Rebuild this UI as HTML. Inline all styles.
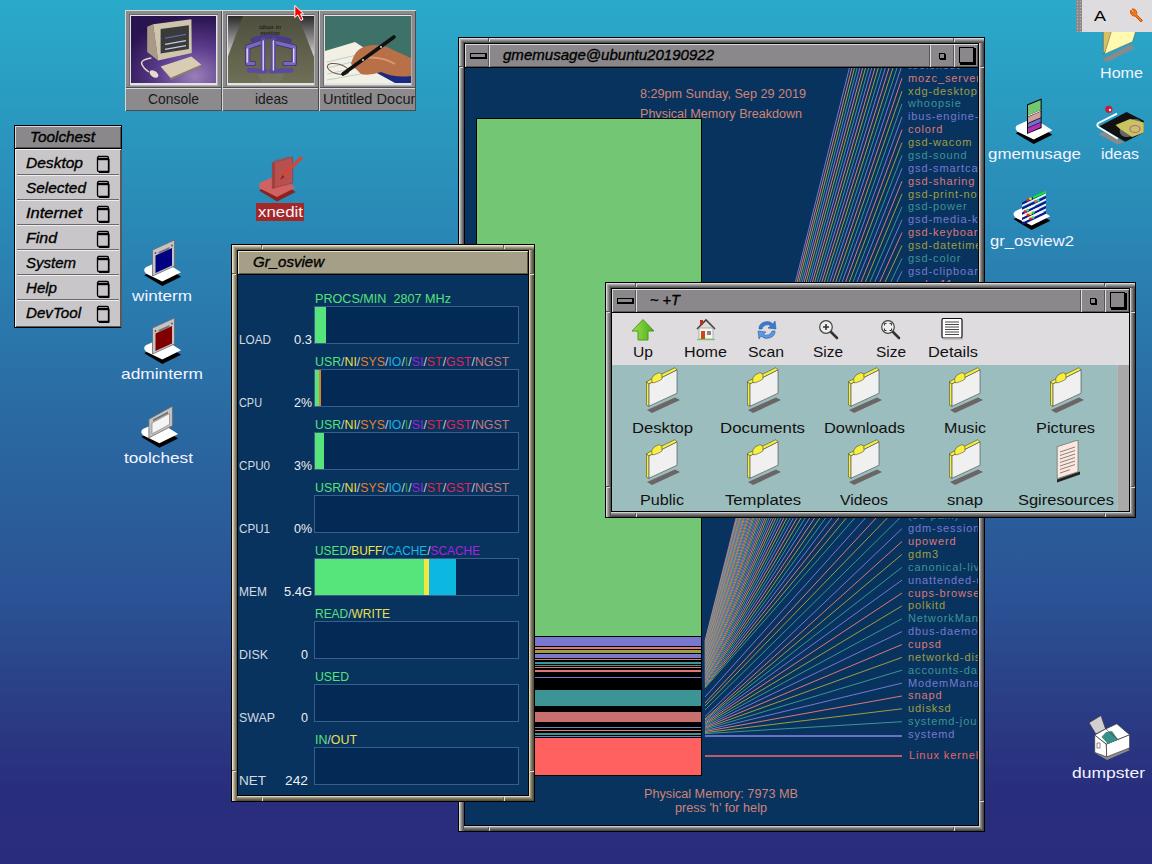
<!DOCTYPE html><html><head><meta charset="utf-8"><style>
html,body{margin:0;padding:0}
body{width:1152px;height:864px;overflow:hidden;position:relative;font-family:"Liberation Sans",sans-serif;
background:linear-gradient(to bottom,#2aaaca 0px,#2a8cb8 200px,#2a6ca4 400px,#2a5294 600px,#2a3e86 700px,#292e7c 790px,#292c7a 864px);}
div,span,svg{position:absolute;box-sizing:border-box}
.t{white-space:pre;line-height:normal;transform-origin:0 0}
.t span{position:static}
</style></head><body>
<svg style="left:140px;top:236px" width="46" height="54" viewBox="140 236 46 54"><polygon points="144.3,275.3 162.3,286.1 181.0,276.8 162.0,264.5" fill="#000"/><path d="M145.8,267.3 Q142.3,270.3 146.3,273.8 L162.3,281.6 L181.0,272.3 L162.0,260.0 Z" fill="#fff"/><polygon points="152.5,250 174.5,240 174.5,266 152.5,276" fill="#c4c4c4" stroke="#6a6a6a" stroke-width="0.8"/><polygon points="155.5,255.5 172,248 172,265.5 155.5,273" fill="#000080"/><polygon points="158.5,252 169.5,247 169.5,249 158.5,254" fill="#707070"/><circle cx="155.5" cy="253" r="0.9" fill="#555"/><circle cx="172" cy="245.5" r="0.9" fill="#555"/></svg>
<span class="t" style="left:132px;top:287px;font:normal normal 15px Liberation Sans;color:#f4f4ff;transform:scaleX(1.1425);">winterm</span>
<svg style="left:140px;top:314px" width="46" height="54" viewBox="140 314 46 54"><polygon points="144.3,353.3 162.3,364.1 181.0,354.8 162.0,342.5" fill="#000"/><path d="M145.8,345.3 Q142.3,348.3 146.3,351.8 L162.3,359.6 L181.0,350.3 L162.0,338.0 Z" fill="#fff"/><polygon points="152.5,328 174.5,318 174.5,344 152.5,354" fill="#c4c4c4" stroke="#6a6a6a" stroke-width="0.8"/><polygon points="155.5,333.5 172,326 172,343.5 155.5,351" fill="#800000"/><polygon points="158.5,330 169.5,325 169.5,327 158.5,332" fill="#707070"/><circle cx="155.5" cy="331" r="0.9" fill="#555"/><circle cx="172" cy="323.5" r="0.9" fill="#555"/></svg>
<span class="t" style="left:121px;top:365px;font:normal normal 15px Liberation Sans;color:#f4f4ff;transform:scaleX(1.1572);">adminterm</span>
<svg style="left:136px;top:402px" width="44" height="52" viewBox="136 402 44 52"><polygon points="141.4,437.0 159.4,447.8 178.1,438.5 159.1,426.2" fill="#000"/><path d="M142.9,429.0 Q139.4,432.0 143.4,435.5 L159.4,443.3 L178.1,434.0 L159.1,421.7 Z" fill="#fff"/><polygon points="148.9,419.3 172.4,406.3 172.4,425.7 148.9,437.8" fill="#c4c4c4" stroke="#6a6a6a" stroke-width="0.8"/><polygon points="152,423 169.5,413.5 169.5,424.5 152,434" fill="#f4f4f4" stroke="#777" stroke-width="0.6"/><polygon points="153,419.5 168,411.5 168,413.5 153,421.5" fill="#707070"/></svg>
<span class="t" style="left:124px;top:449px;font:normal normal 15px Liberation Sans;color:#f4f4ff;transform:scaleX(1.1491);">toolchest</span>
<svg style="left:254px;top:150px" width="52" height="54" viewBox="254 150 52 54"><polygon points="259.0,190.6 277.0,201.4 295.7,192.1 276.7,179.8" fill="#8c2222"/><path d="M260.5,182.6 Q257.0,185.6 261.0,189.1 L277.0,196.9 L295.7,187.6 L276.7,175.3 Z" fill="#d06262"/><polygon points="272.3,163 292.7,157 292.7,183 272.3,188.5" fill="#b85050" stroke="#8c3030" stroke-width="0.5"/><polygon points="272.3,163 275,162 275,187.5 272.3,188.5" fill="#a04040"/><path d="M274,162 q2,-4 4,-1 q2,-4 4,-1 q2,-4 4,-1 q2,-4 4,-1" fill="none" stroke="#b04848" stroke-width="1"/><line x1="282" y1="177" x2="301" y2="158" stroke="#d04838" stroke-width="3.2" stroke-linecap="round"/><polygon points="280,180 282.5,175 284.5,177" fill="#8c2020"/></svg>
<div style="left:256px;top:203px;width:48px;height:18px;background:#a52828;"></div>
<span class="t" style="left:258px;top:203px;font:normal normal 15px Liberation Sans;color:#f4f4ff;transform:scaleX(1.1241);">xnedit</span>
<svg style="left:1010px;top:96px" width="46" height="52" viewBox="1010 96 46 52"><polygon points="1015.7,133.2 1033.7,144.0 1052.4,134.7 1033.4,122.4" fill="#000"/><path d="M1017.2,125.2 Q1013.7,128.2 1017.7,131.7 L1033.7,139.5 L1052.4,130.2 L1033.4,117.9 Z" fill="#fff"/><polygon points="1027,104.4 1041.6,98.4 1041.6,128 1027,134" fill="#000"/><polygon points="1028,105.2 1040.6,100 1040.6,110 1028,115.5" fill="#70c870"/><polygon points="1028,117 1040.6,111.5 1040.6,117.5 1028,123" fill="#d0a0a0"/><polygon points="1028,123.8 1040.6,118.3 1040.6,122 1028,127.5" fill="#7070d0"/><polygon points="1028,128 1040.6,122.5 1040.6,127.3 1028,133" fill="#b030b0"/><line x1="1028" y1="116" x2="1040.6" y2="110.7" stroke="#fff" stroke-width="1"/></svg>
<span class="t" style="left:988px;top:145px;font:normal normal 15px Liberation Sans;color:#f4f4ff;transform:scaleX(1.1266);">gmemusage</span>
<svg style="left:1094px;top:104px" width="54" height="44" viewBox="1094 104 54 44"><polygon points="1098,134 1118,144.5 1124,142 1104,132" fill="#8a8a8a"/><polygon points="1099,126.6 1126.5,111.9 1143.8,120.8 1143.8,132.4 1125.3,141.7" fill="#111"/><ellipse cx="1131" cy="128" rx="12" ry="8" fill="#666" transform="rotate(-28 1131 128)"/><polygon points="1115.5,124.9 1130,119.1 1143.8,122.6 1143.8,132.4 1132.2,137 1120,129" fill="#c8c460"/><ellipse cx="1135" cy="129" rx="5" ry="3.5" fill="none" stroke="#c060a0" stroke-width="1.2"/><path d="M1117,113.6 L1098.5,123 Q1096,125 1098.5,127 L1117.8,138.8" fill="none" stroke="#fff" stroke-width="1.8"/><circle cx="1108.8" cy="109.3" r="3.6" fill="#d01838"/><circle cx="1110" cy="110" r="1.2" fill="#fff"/></svg>
<span class="t" style="left:1101px;top:145px;font:normal normal 15px Liberation Sans;color:#f4f4ff;transform:scaleX(1.0597);">ideas</span>
<svg style="left:1008px;top:186px" width="48" height="50" viewBox="1008 186 48 50"><polygon points="1013.6,219.2 1031.6,230.0 1050.3,220.7 1031.3,208.4" fill="#000"/><path d="M1015.1,211.2 Q1011.6,214.2 1015.6,217.7 L1031.6,225.5 L1050.3,216.2 L1031.3,203.9 Z" fill="#fff"/><polygon points="1022,202.4 1046,190.8 1046,193.3 1022,204.9" fill="#0a1a90"/><polygon points="1022,204.9 1046,193.3 1046,195.2 1022,206.8" fill="#f4f4f4"/><polygon points="1022,207.5 1046,195.9 1046,198.4 1022,210.0" fill="#0a1a90"/><polygon points="1022,210.0 1046,198.4 1046,200.3 1022,211.9" fill="#f4f4f4"/><polygon points="1022,212.6 1046,201.0 1046,203.5 1022,215.1" fill="#0a1a90"/><polygon points="1022,215.1 1046,203.5 1046,205.4 1022,217.0" fill="#f4f4f4"/><polygon points="1022,217.7 1046,206.1 1046,208.6 1022,220.2" fill="#0a1a90"/><polygon points="1022,220.2 1046,208.6 1046,210.5 1022,222.1" fill="#f4f4f4"/><polygon points="1022,222.8 1046,211.2 1046,213.7 1022,225.3" fill="#0a1a90"/><polygon points="1033,196.6 1046,190.5 1046,192.9 1033,199" fill="#10e030"/><circle cx="1028" cy="200" r="1.5" fill="#f02020"/><circle cx="1030.5" cy="198.8" r="1.4" fill="#f0e020"/><circle cx="1025" cy="211.5" r="1.5" fill="#f02020"/><circle cx="1027.5" cy="210.3" r="1.4" fill="#30e060"/><circle cx="1028" cy="215" r="1.5" fill="#f02020"/><circle cx="1030.5" cy="213.8" r="1.4" fill="#f0e020"/><circle cx="1033" cy="212.6" r="1.4" fill="#30e060"/><circle cx="1030.5" cy="218.8" r="1.4" fill="#f02020"/><circle cx="1033" cy="217.6" r="1.4" fill="#30e060"/><circle cx="1035.5" cy="201.5" r="1.4" fill="#f06020"/><circle cx="1038" cy="200.3" r="1.4" fill="#30e0a0"/></svg>
<span class="t" style="left:990px;top:232px;font:normal normal 15px Liberation Sans;color:#f4f4ff;transform:scaleX(1.1071);">gr_osview2</span>
<svg style="left:1098px;top:24px" width="44" height="42" viewBox="1098 24 44 42"><polygon points="1102.3,59.4 1107.5,62 1135,47.9 1130,44.8" fill="#8a8a8a"/><polygon points="1103.3,24 1113.7,24 1113.7,40 1103.3,54.2" fill="#d8c060" stroke="#555" stroke-width="0.5"/><polygon points="1113.7,24 1138,24 1132.5,41.7 1104.4,54.2" fill="#fffab0" stroke="#555" stroke-width="0.5"/></svg>
<span class="t" style="left:1100px;top:64px;font:normal normal 15px Liberation Sans;color:#f4f4ff;transform:scaleX(1.0746);">Home</span>
<svg style="left:1086px;top:713px" width="48" height="52" viewBox="1086 713 48 52"><polygon points="1095,753 1107,760 1130,750 1118,744" fill="#8c8c8c"/><polygon points="1089,722.7 1101,715.5 1105.6,729 1095.8,734" fill="#d0d0d0" stroke="#333" stroke-width="0.7"/><polygon points="1094.7,735 1106.3,744.1 1106.7,756.9 1094.7,752.4" fill="#fff" stroke="#333" stroke-width="0.7"/><polygon points="1106.3,744.1 1129.6,734.7 1129.6,747.9 1106.7,756.9" fill="#fff" stroke="#333" stroke-width="0.7"/><polygon points="1094.7,735 1105.6,729 1116.8,723.8 1129.6,734.7 1106.3,744.1" fill="#fff" stroke="#333" stroke-width="0.7"/><polygon points="1101.5,737 1106,732 1112,731 1118,739.5 1108,744" fill="#3a9088"/><line x1="1106" y1="729" x2="1118.5" y2="740" stroke="#333" stroke-width="0.6"/><rect x="1097" y="743" width="3" height="5" fill="none" stroke="#444" stroke-width="0.6"/></svg>
<span class="t" style="left:1072px;top:764px;font:normal normal 15px Liberation Sans;color:#f4f4ff;transform:scaleX(1.1674);">dumpster</span>
<div style="left:458px;top:37px;width:527px;height:795px;background:#000;"></div>
<div style="left:459px;top:38px;width:525px;height:793px;background:#8c8c8c;box-shadow:inset 1px 1px 0 #d8d6d8,inset 2px 2px 0 #aaaaaa,inset 3px 3px 0 #8c8c8c,inset 4px 4px 0 #6e6e6e,inset 5px 5px 0 #545454,inset -1px -1px 0 #464646,inset -2px -2px 0 #5c5c5c,inset -3px -3px 0 #767676,inset -4px -4px 0 #949494,inset -5px -5px 0 #cccccc;"></div>
<div style="left:488px;top:38px;width:1px;height:5px;background:#545454;"></div>
<div style="left:489px;top:38px;width:1px;height:5px;background:#d8d6d8;"></div>
<div style="left:488px;top:826px;width:1px;height:5px;background:#545454;"></div>
<div style="left:489px;top:826px;width:1px;height:5px;background:#d8d6d8;"></div>
<div style="left:953px;top:38px;width:1px;height:5px;background:#545454;"></div>
<div style="left:954px;top:38px;width:1px;height:5px;background:#d8d6d8;"></div>
<div style="left:953px;top:826px;width:1px;height:5px;background:#545454;"></div>
<div style="left:954px;top:826px;width:1px;height:5px;background:#d8d6d8;"></div>
<div style="left:459px;top:66px;width:5px;height:1px;background:#545454;"></div>
<div style="left:459px;top:67px;width:5px;height:1px;background:#d8d6d8;"></div>
<div style="left:979px;top:66px;width:5px;height:1px;background:#545454;"></div>
<div style="left:979px;top:67px;width:5px;height:1px;background:#d8d6d8;"></div>
<div style="left:459px;top:800px;width:5px;height:1px;background:#545454;"></div>
<div style="left:459px;top:801px;width:5px;height:1px;background:#d8d6d8;"></div>
<div style="left:979px;top:800px;width:5px;height:1px;background:#545454;"></div>
<div style="left:979px;top:801px;width:5px;height:1px;background:#d8d6d8;"></div>
<div style="left:464px;top:43px;width:515px;height:783px;background:#000;box-shadow:1px 1px 0 #d0d0d0,-1px -1px 0 #545454;"></div>
<div style="left:465px;top:44px;width:24px;height:23px;background:#8a888a;box-shadow:inset 1px 1px 0 #dcdcdc,inset -1px -1px 0 #585858;"></div>
<div style="left:470px;top:53px;width:17px;height:6px;background:#000;"></div>
<div style="left:471px;top:54px;width:14px;height:3px;background:#8a888a;"></div>
<div style="left:930px;top:44px;width:24px;height:23px;background:#8a888a;box-shadow:inset 1px 1px 0 #dcdcdc,inset -1px -1px 0 #585858;"></div>
<div style="left:954px;top:44px;width:24px;height:23px;background:#8a888a;box-shadow:inset 1px 1px 0 #dcdcdc,inset -1px -1px 0 #585858;"></div>
<div style="left:939px;top:53px;width:6px;height:6px;background:transparent;border:1px solid #000;"></div>
<div style="left:945px;top:54px;width:1px;height:6px;background:#000;"></div>
<div style="left:940px;top:59px;width:6px;height:1px;background:#000;"></div>
<div style="left:959px;top:47px;width:15px;height:16px;background:transparent;border:1px solid #000;"></div>
<div style="left:974px;top:48px;width:2px;height:17px;background:#000;"></div>
<div style="left:960px;top:63px;width:16px;height:2px;background:#000;"></div>
<div style="left:489px;top:44px;width:441px;height:23px;background:#8a888a;box-shadow:inset 1px 1px 0 #dcdcdc,inset -1px -1px 0 #585858;"></div>
<div style="left:465px;top:68px;width:513px;height:757px;background:#08335f;"></div>
<span class="t" style="left:503px;top:46px;font:italic normal 15px Liberation Sans;color:#000;transform:scaleX(1.0029);-webkit-text-stroke:0.35px #000">gmemusage@ubuntu20190922</span>
<span class="t" style="left:640px;top:87px;font:normal normal 12px Liberation Sans;color:#d08474;transform:scaleX(1.0513);letter-spacing:0px">8:29pm Sunday, Sep 29 2019</span>
<span class="t" style="left:640px;top:107px;font:normal normal 12px Liberation Sans;color:#d08474;transform:scaleX(1.0470);">Physical Memory Breakdown</span>
<span class="t" style="left:644px;top:787px;font:normal normal 12px Liberation Sans;color:#d08474;transform:scaleX(1.0543);">Physical Memory: 7973 MB</span>
<span class="t" style="left:675px;top:801px;font:normal normal 12px Liberation Sans;color:#d08474;transform:scaleX(1.0539);">press 'h' for help</span>
<div style="left:476px;top:118px;width:226px;height:658px;background:#000;"></div>
<div style="left:477px;top:119px;width:224px;height:517px;background:#73c673;"></div>
<div style="left:477px;top:637px;width:224px;height:9px;background:#7878d0;"></div>
<div style="left:477px;top:647px;width:224px;height:2px;background:#dc7878;"></div>
<div style="left:477px;top:650px;width:224px;height:3px;background:#9e9e40;"></div>
<div style="left:477px;top:654px;width:224px;height:4px;background:#7878d0;"></div>
<div style="left:477px;top:659px;width:224px;height:1px;background:#dc7878;"></div>
<div style="left:477px;top:662px;width:224px;height:2px;background:#3c9494;"></div>
<div style="left:477px;top:665px;width:224px;height:1px;background:#3c9494;"></div>
<div style="left:477px;top:667px;width:224px;height:1px;background:#dc7878;"></div>
<div style="left:477px;top:670px;width:224px;height:2px;background:#dc7878;"></div>
<div style="left:477px;top:677px;width:224px;height:1px;background:#7878d0;"></div>
<div style="left:477px;top:690px;width:224px;height:16px;background:#3c9494;"></div>
<div style="left:477px;top:712px;width:224px;height:10px;background:#c87070;"></div>
<div style="left:477px;top:727px;width:224px;height:1px;background:#7878d0;"></div>
<div style="left:477px;top:730px;width:224px;height:1px;background:#dc7878;"></div>
<div style="left:477px;top:733px;width:224px;height:2px;background:#3c9494;"></div>
<div style="left:477px;top:736px;width:224px;height:1px;background:#7878d0;"></div>
<div style="left:477px;top:738px;width:224px;height:37px;background:#ff6060;"></div>
<div style="left:465px;top:68px;width:513px;height:757px;overflow:hidden">
<svg style="left:0;top:0" width="513" height="757" viewBox="465 68 513 757"><line x1="902" y1="-140.6" x2="705" y2="641.0" stroke="#7878d0" stroke-width="1"/><line x1="902" y1="-127.7" x2="705" y2="642.0" stroke="#dc7878" stroke-width="1"/><line x1="902" y1="-114.8" x2="705" y2="643.0" stroke="#9e9e40" stroke-width="1"/><line x1="902" y1="-102.0" x2="705" y2="644.0" stroke="#3c9494" stroke-width="1"/><line x1="902" y1="-89.1" x2="705" y2="645.0" stroke="#7878d0" stroke-width="1"/><line x1="902" y1="-76.2" x2="705" y2="646.0" stroke="#dc7878" stroke-width="1"/><line x1="902" y1="-63.4" x2="705" y2="647.0" stroke="#9e9e40" stroke-width="1"/><line x1="902" y1="-50.5" x2="705" y2="648.0" stroke="#3c9494" stroke-width="1"/><line x1="902" y1="-37.6" x2="705" y2="649.0" stroke="#7878d0" stroke-width="1"/><line x1="902" y1="-24.8" x2="705" y2="650.0" stroke="#dc7878" stroke-width="1"/><line x1="902" y1="-11.9" x2="705" y2="651.0" stroke="#9e9e40" stroke-width="1"/><line x1="902" y1="1.0" x2="705" y2="652.0" stroke="#3c9494" stroke-width="1"/><line x1="902" y1="13.9" x2="705" y2="653.0" stroke="#7878d0" stroke-width="1"/><line x1="902" y1="26.7" x2="705" y2="654.0" stroke="#dc7878" stroke-width="1"/><line x1="902" y1="39.6" x2="705" y2="655.0" stroke="#9e9e40" stroke-width="1"/><line x1="902" y1="52.5" x2="705" y2="656.0" stroke="#3c9494" stroke-width="1"/><line x1="902" y1="65.3" x2="705" y2="657.0" stroke="#7878d0" stroke-width="1"/><line x1="902" y1="78.2" x2="705" y2="658.0" stroke="#dc7878" stroke-width="1"/><line x1="902" y1="91.1" x2="705" y2="659.0" stroke="#9e9e40" stroke-width="1"/><line x1="902" y1="103.9" x2="705" y2="660.0" stroke="#3c9494" stroke-width="1"/><line x1="902" y1="116.8" x2="705" y2="661.0" stroke="#7878d0" stroke-width="1"/><line x1="902" y1="129.7" x2="705" y2="662.0" stroke="#dc7878" stroke-width="1"/><line x1="902" y1="142.6" x2="705" y2="663.0" stroke="#9e9e40" stroke-width="1"/><line x1="902" y1="155.4" x2="705" y2="664.0" stroke="#3c9494" stroke-width="1"/><line x1="902" y1="168.3" x2="705" y2="665.0" stroke="#7878d0" stroke-width="1"/><line x1="902" y1="181.2" x2="705" y2="666.0" stroke="#dc7878" stroke-width="1"/><line x1="902" y1="194.0" x2="705" y2="667.0" stroke="#9e9e40" stroke-width="1"/><line x1="902" y1="206.9" x2="705" y2="668.0" stroke="#3c9494" stroke-width="1"/><line x1="902" y1="219.8" x2="705" y2="669.0" stroke="#7878d0" stroke-width="1"/><line x1="902" y1="232.6" x2="705" y2="670.0" stroke="#dc7878" stroke-width="1"/><line x1="902" y1="245.5" x2="705" y2="671.0" stroke="#9e9e40" stroke-width="1"/><line x1="902" y1="258.4" x2="705" y2="672.0" stroke="#3c9494" stroke-width="1"/><line x1="902" y1="271.2" x2="705" y2="673.0" stroke="#7878d0" stroke-width="1"/><line x1="902" y1="284.1" x2="705" y2="674.0" stroke="#dc7878" stroke-width="1"/><line x1="902" y1="297.0" x2="705" y2="675.0" stroke="#9e9e40" stroke-width="1"/><line x1="902" y1="309.9" x2="705" y2="676.0" stroke="#3c9494" stroke-width="1"/><line x1="902" y1="322.7" x2="705" y2="677.0" stroke="#7878d0" stroke-width="1"/><line x1="902" y1="335.6" x2="705" y2="678.0" stroke="#dc7878" stroke-width="1"/><line x1="902" y1="348.5" x2="705" y2="679.0" stroke="#9e9e40" stroke-width="1"/><line x1="902" y1="361.3" x2="705" y2="680.0" stroke="#3c9494" stroke-width="1"/><line x1="902" y1="374.2" x2="705" y2="681.0" stroke="#7878d0" stroke-width="1"/><line x1="902" y1="387.1" x2="705" y2="682.0" stroke="#dc7878" stroke-width="1"/><line x1="902" y1="399.9" x2="705" y2="683.0" stroke="#9e9e40" stroke-width="1"/><line x1="902" y1="412.8" x2="705" y2="684.0" stroke="#3c9494" stroke-width="1"/><line x1="902" y1="425.7" x2="705" y2="685.0" stroke="#7878d0" stroke-width="1"/><line x1="902" y1="438.6" x2="705" y2="686.0" stroke="#dc7878" stroke-width="1"/><line x1="902" y1="451.4" x2="705" y2="687.0" stroke="#9e9e40" stroke-width="1"/><line x1="902" y1="464.3" x2="705" y2="688.0" stroke="#3c9494" stroke-width="1"/><line x1="902" y1="477.2" x2="705" y2="697.0" stroke="#7878d0" stroke-width="1"/><line x1="902" y1="490.0" x2="705" y2="703.0" stroke="#dc7878" stroke-width="1"/><line x1="902" y1="502.9" x2="705" y2="706.0" stroke="#9e9e40" stroke-width="1"/><line x1="902" y1="515.8" x2="705" y2="710.0" stroke="#3c9494" stroke-width="1"/><line x1="902" y1="528.6" x2="705" y2="716.5" stroke="#7878d0" stroke-width="1"/><line x1="902" y1="541.5" x2="705" y2="719.0" stroke="#dc7878" stroke-width="1"/><line x1="902" y1="554.4" x2="705" y2="720.0" stroke="#9e9e40" stroke-width="1"/><line x1="902" y1="567.3" x2="705" y2="721.0" stroke="#3c9494" stroke-width="1"/><line x1="902" y1="580.1" x2="705" y2="722.1" stroke="#7878d0" stroke-width="1"/><line x1="902" y1="593.0" x2="705" y2="723.1" stroke="#dc7878" stroke-width="1"/><line x1="902" y1="605.9" x2="705" y2="724.2" stroke="#9e9e40" stroke-width="1"/><line x1="902" y1="618.7" x2="705" y2="725.2" stroke="#3c9494" stroke-width="1"/><line x1="902" y1="631.6" x2="705" y2="726.3" stroke="#7878d0" stroke-width="1"/><line x1="902" y1="644.5" x2="705" y2="727.3" stroke="#dc7878" stroke-width="1"/><line x1="902" y1="657.4" x2="705" y2="728.4" stroke="#9e9e40" stroke-width="1"/><line x1="902" y1="670.2" x2="705" y2="729.4" stroke="#3c9494" stroke-width="1"/><line x1="902" y1="683.1" x2="705" y2="730.5" stroke="#7878d0" stroke-width="1"/><line x1="902" y1="696.0" x2="705" y2="731.5" stroke="#dc7878" stroke-width="1"/><line x1="902" y1="708.8" x2="705" y2="732.6" stroke="#9e9e40" stroke-width="1"/><line x1="902" y1="721.7" x2="705" y2="733.6" stroke="#3c9494" stroke-width="1"/><line x1="705" y1="736" x2="902" y2="736" stroke="#6a70c8" stroke-width="2"/><line x1="705" y1="756" x2="902" y2="756" stroke="#c05a6a" stroke-width="2"/></svg>
</div>
<div style="left:465px;top:68px;width:513px;height:757px;overflow:hidden">
<span class="t" style="left:443px;top:-9px;font:normal normal 11px Liberation Sans;color:#7878d0;letter-spacing:0.9px">toolchest</span>
<span class="t" style="left:443px;top:4px;font:normal normal 11px Liberation Sans;color:#dc7878;letter-spacing:0.9px">mozc_server</span>
<span class="t" style="left:443px;top:17px;font:normal normal 11px Liberation Sans;color:#9e9e40;letter-spacing:0.9px">xdg-desktop-portal</span>
<span class="t" style="left:443px;top:29px;font:normal normal 11px Liberation Sans;color:#3c9494;letter-spacing:0.9px">whoopsie</span>
<span class="t" style="left:443px;top:42px;font:normal normal 11px Liberation Sans;color:#7878d0;letter-spacing:0.9px">ibus-engine-simple</span>
<span class="t" style="left:443px;top:55px;font:normal normal 11px Liberation Sans;color:#dc7878;letter-spacing:0.9px">colord</span>
<span class="t" style="left:443px;top:68px;font:normal normal 11px Liberation Sans;color:#9e9e40;letter-spacing:0.9px">gsd-wacom</span>
<span class="t" style="left:443px;top:81px;font:normal normal 11px Liberation Sans;color:#3c9494;letter-spacing:0.9px">gsd-sound</span>
<span class="t" style="left:443px;top:94px;font:normal normal 11px Liberation Sans;color:#7878d0;letter-spacing:0.9px">gsd-smartcard</span>
<span class="t" style="left:443px;top:107px;font:normal normal 11px Liberation Sans;color:#dc7878;letter-spacing:0.9px">gsd-sharing</span>
<span class="t" style="left:443px;top:120px;font:normal normal 11px Liberation Sans;color:#9e9e40;letter-spacing:0.9px">gsd-print-notifications</span>
<span class="t" style="left:443px;top:132px;font:normal normal 11px Liberation Sans;color:#3c9494;letter-spacing:0.9px">gsd-power</span>
<span class="t" style="left:443px;top:145px;font:normal normal 11px Liberation Sans;color:#7878d0;letter-spacing:0.9px">gsd-media-keys</span>
<span class="t" style="left:443px;top:158px;font:normal normal 11px Liberation Sans;color:#dc7878;letter-spacing:0.9px">gsd-keyboard</span>
<span class="t" style="left:443px;top:171px;font:normal normal 11px Liberation Sans;color:#9e9e40;letter-spacing:0.9px">gsd-datetime</span>
<span class="t" style="left:443px;top:184px;font:normal normal 11px Liberation Sans;color:#3c9494;letter-spacing:0.9px">gsd-color</span>
<span class="t" style="left:443px;top:197px;font:normal normal 11px Liberation Sans;color:#7878d0;letter-spacing:0.9px">gsd-clipboard</span>
<span class="t" style="left:443px;top:210px;font:normal normal 11px Liberation Sans;color:#dc7878;letter-spacing:0.9px">gsd-a11y-settings</span>
<span class="t" style="left:443px;top:441px;font:normal normal 11px Liberation Sans;color:#3c9494;letter-spacing:0.9px">(sd-pam)</span>
<span class="t" style="left:443px;top:454px;font:normal normal 11px Liberation Sans;color:#7878d0;letter-spacing:0.9px">gdm-session-worker</span>
<span class="t" style="left:443px;top:467px;font:normal normal 11px Liberation Sans;color:#dc7878;letter-spacing:0.9px">upowerd</span>
<span class="t" style="left:443px;top:480px;font:normal normal 11px Liberation Sans;color:#9e9e40;letter-spacing:0.9px">gdm3</span>
<span class="t" style="left:443px;top:493px;font:normal normal 11px Liberation Sans;color:#3c9494;letter-spacing:0.9px">canonical-livepatch</span>
<span class="t" style="left:443px;top:506px;font:normal normal 11px Liberation Sans;color:#7878d0;letter-spacing:0.9px">unattended-upgrades</span>
<span class="t" style="left:443px;top:519px;font:normal normal 11px Liberation Sans;color:#dc7878;letter-spacing:0.9px">cups-browsed</span>
<span class="t" style="left:443px;top:531px;font:normal normal 11px Liberation Sans;color:#9e9e40;letter-spacing:0.9px">polkitd</span>
<span class="t" style="left:443px;top:544px;font:normal normal 11px Liberation Sans;color:#3c9494;letter-spacing:0.9px">NetworkManager</span>
<span class="t" style="left:443px;top:557px;font:normal normal 11px Liberation Sans;color:#7878d0;letter-spacing:0.9px">dbus-daemon</span>
<span class="t" style="left:443px;top:570px;font:normal normal 11px Liberation Sans;color:#dc7878;letter-spacing:0.9px">cupsd</span>
<span class="t" style="left:443px;top:583px;font:normal normal 11px Liberation Sans;color:#9e9e40;letter-spacing:0.9px">networkd-dispatcher</span>
<span class="t" style="left:443px;top:596px;font:normal normal 11px Liberation Sans;color:#3c9494;letter-spacing:0.9px">accounts-daemon</span>
<span class="t" style="left:443px;top:609px;font:normal normal 11px Liberation Sans;color:#7878d0;letter-spacing:0.9px">ModemManager</span>
<span class="t" style="left:443px;top:621px;font:normal normal 11px Liberation Sans;color:#dc7878;letter-spacing:0.9px">snapd</span>
<span class="t" style="left:443px;top:634px;font:normal normal 11px Liberation Sans;color:#9e9e40;letter-spacing:0.9px">udisksd</span>
<span class="t" style="left:443px;top:647px;font:normal normal 11px Liberation Sans;color:#3c9494;letter-spacing:0.9px">systemd-journald</span>
<span class="t" style="left:443px;top:660px;font:normal normal 11px Liberation Sans;color:#7878d0;letter-spacing:0.9px">systemd</span>
<span class="t" style="left:444px;top:681px;font:normal normal 11px Liberation Sans;color:#e86464;letter-spacing:0.9px">Linux kernel</span>
</div>
<div style="left:231px;top:244px;width:304px;height:558px;background:#000;"></div>
<div style="left:232px;top:245px;width:302px;height:556px;background:#a29b83;box-shadow:inset 1px 1px 0 #e8e0c8,inset 2px 2px 0 #c4bca4,inset 3px 3px 0 #a29b83,inset 4px 4px 0 #868069,inset 5px 5px 0 #6a634f,inset -1px -1px 0 #544e3e,inset -2px -2px 0 #6a634f,inset -3px -3px 0 #837c66,inset -4px -4px 0 #a29b83,inset -5px -5px 0 #ddd5bc;"></div>
<div style="left:261px;top:245px;width:1px;height:5px;background:#6a634f;"></div>
<div style="left:262px;top:245px;width:1px;height:5px;background:#e8e0c8;"></div>
<div style="left:261px;top:796px;width:1px;height:5px;background:#6a634f;"></div>
<div style="left:262px;top:796px;width:1px;height:5px;background:#e8e0c8;"></div>
<div style="left:503px;top:245px;width:1px;height:5px;background:#6a634f;"></div>
<div style="left:504px;top:245px;width:1px;height:5px;background:#e8e0c8;"></div>
<div style="left:503px;top:796px;width:1px;height:5px;background:#6a634f;"></div>
<div style="left:504px;top:796px;width:1px;height:5px;background:#e8e0c8;"></div>
<div style="left:232px;top:273px;width:5px;height:1px;background:#6a634f;"></div>
<div style="left:232px;top:274px;width:5px;height:1px;background:#e8e0c8;"></div>
<div style="left:529px;top:273px;width:5px;height:1px;background:#6a634f;"></div>
<div style="left:529px;top:274px;width:5px;height:1px;background:#e8e0c8;"></div>
<div style="left:232px;top:770px;width:5px;height:1px;background:#6a634f;"></div>
<div style="left:232px;top:771px;width:5px;height:1px;background:#e8e0c8;"></div>
<div style="left:529px;top:770px;width:5px;height:1px;background:#6a634f;"></div>
<div style="left:529px;top:771px;width:5px;height:1px;background:#e8e0c8;"></div>
<div style="left:237px;top:250px;width:292px;height:546px;background:#000;box-shadow:1px 1px 0 #ded6bd,-1px -1px 0 #6a634f;"></div>
<div style="left:238px;top:251px;width:290px;height:23px;background:#a69f87;box-shadow:inset 1px 1px 0 #e8e0c8,inset -1px -1px 0 #5e5846;"></div>
<div style="left:238px;top:275px;width:290px;height:520px;background:#08335f;"></div>
<span class="t" style="left:253px;top:253px;font:italic normal 15px Liberation Sans;color:#000;transform:scaleX(1.0020);-webkit-text-stroke:0.35px #000">Gr_osview</span>
<div style="left:314px;top:306px;width:205px;height:38px;background:#022a54;border:1px solid #3b5d8c;"></div>
<span class="t" style="left:315px;top:291px;font:normal normal 13px Liberation Sans;color:#55e27a;transform:scaleX(0.9703);"><span style="color:#55e27a">PROCS/MIN  2807 MHz</span></span>
<span class="t" style="left:239px;top:332px;font:normal normal 13px Liberation Sans;color:#d4dae0;transform:scaleX(0.9038);">LOAD</span>
<span class="t" style="left:294px;top:332px;font:normal normal 13px Liberation Sans;color:#f0f0f0;transform:scaleX(0.9957);">0.3</span>
<div style="left:314px;top:369px;width:205px;height:38px;background:#022a54;border:1px solid #3b5d8c;"></div>
<span class="t" style="left:315px;top:354px;font:normal normal 13px Liberation Sans;color:#55e27a;transform:scaleX(0.9490);"><span style="color:#55e27a">USR</span><span style="color:#c8cdd4">/</span><span style="color:#e6e048">NI</span><span style="color:#c8cdd4">/</span><span style="color:#e08030">SYS</span><span style="color:#c8cdd4">/</span><span style="color:#18b0e0">IO</span><span style="color:#c8cdd4">/</span><span style="color:#20a040">I</span><span style="color:#c8cdd4">/</span><span style="color:#9a22e0">SI</span><span style="color:#c8cdd4">/</span><span style="color:#d82848">ST</span><span style="color:#c8cdd4">/</span><span style="color:#e0245c">GST</span><span style="color:#c8cdd4">/</span><span style="color:#c47a7a">NGST</span></span>
<span class="t" style="left:239px;top:395px;font:normal normal 13px Liberation Sans;color:#d4dae0;transform:scaleX(0.8378);">CPU</span>
<span class="t" style="left:294px;top:395px;font:normal normal 13px Liberation Sans;color:#f0f0f0;transform:scaleX(0.9576);">2%</span>
<div style="left:314px;top:432px;width:205px;height:38px;background:#022a54;border:1px solid #3b5d8c;"></div>
<span class="t" style="left:315px;top:417px;font:normal normal 13px Liberation Sans;color:#55e27a;transform:scaleX(0.9490);"><span style="color:#55e27a">USR</span><span style="color:#c8cdd4">/</span><span style="color:#e6e048">NI</span><span style="color:#c8cdd4">/</span><span style="color:#e08030">SYS</span><span style="color:#c8cdd4">/</span><span style="color:#18b0e0">IO</span><span style="color:#c8cdd4">/</span><span style="color:#20a040">I</span><span style="color:#c8cdd4">/</span><span style="color:#9a22e0">SI</span><span style="color:#c8cdd4">/</span><span style="color:#d82848">ST</span><span style="color:#c8cdd4">/</span><span style="color:#e0245c">GST</span><span style="color:#c8cdd4">/</span><span style="color:#c47a7a">NGST</span></span>
<span class="t" style="left:239px;top:458px;font:normal normal 13px Liberation Sans;color:#d4dae0;transform:scaleX(0.8937);">CPU0</span>
<span class="t" style="left:294px;top:458px;font:normal normal 13px Liberation Sans;color:#f0f0f0;transform:scaleX(0.9576);">3%</span>
<div style="left:314px;top:495px;width:205px;height:38px;background:#022a54;border:1px solid #3b5d8c;"></div>
<span class="t" style="left:315px;top:480px;font:normal normal 13px Liberation Sans;color:#55e27a;transform:scaleX(0.9490);"><span style="color:#55e27a">USR</span><span style="color:#c8cdd4">/</span><span style="color:#e6e048">NI</span><span style="color:#c8cdd4">/</span><span style="color:#e08030">SYS</span><span style="color:#c8cdd4">/</span><span style="color:#18b0e0">IO</span><span style="color:#c8cdd4">/</span><span style="color:#20a040">I</span><span style="color:#c8cdd4">/</span><span style="color:#9a22e0">SI</span><span style="color:#c8cdd4">/</span><span style="color:#d82848">ST</span><span style="color:#c8cdd4">/</span><span style="color:#e0245c">GST</span><span style="color:#c8cdd4">/</span><span style="color:#c47a7a">NGST</span></span>
<span class="t" style="left:239px;top:521px;font:normal normal 13px Liberation Sans;color:#d4dae0;transform:scaleX(0.8937);">CPU1</span>
<span class="t" style="left:294px;top:521px;font:normal normal 13px Liberation Sans;color:#f0f0f0;transform:scaleX(0.9576);">0%</span>
<div style="left:314px;top:558px;width:205px;height:38px;background:#022a54;border:1px solid #3b5d8c;"></div>
<span class="t" style="left:315px;top:543px;font:normal normal 13px Liberation Sans;color:#55e27a;transform:scaleX(0.9137);"><span style="color:#55e27a">USED</span><span style="color:#c8cdd4">/</span><span style="color:#f0e448">BUFF</span><span style="color:#c8cdd4">/</span><span style="color:#18b8e0">CACHE</span><span style="color:#c8cdd4">/</span><span style="color:#a424e0">SCACHE</span></span>
<span class="t" style="left:239px;top:584px;font:normal normal 13px Liberation Sans;color:#d4dae0;transform:scaleX(0.9228);">MEM</span>
<span class="t" style="left:284px;top:584px;font:normal normal 13px Liberation Sans;color:#f0f0f0;transform:scaleX(0.9933);">5.4G</span>
<div style="left:314px;top:621px;width:205px;height:38px;background:#022a54;border:1px solid #3b5d8c;"></div>
<span class="t" style="left:315px;top:606px;font:normal normal 13px Liberation Sans;color:#55e27a;transform:scaleX(0.9188);"><span style="color:#55e27a">READ</span><span style="color:#c8cdd4">/</span><span style="color:#e8e050">WRITE</span></span>
<span class="t" style="left:239px;top:647px;font:normal normal 13px Liberation Sans;color:#d4dae0;transform:scaleX(0.9557);">DISK</span>
<span class="t" style="left:301px;top:647px;font:normal normal 13px Liberation Sans;color:#f0f0f0;transform:scaleX(0.9676);">0</span>
<div style="left:314px;top:684px;width:205px;height:38px;background:#022a54;border:1px solid #3b5d8c;"></div>
<span class="t" style="left:315px;top:669px;font:normal normal 13px Liberation Sans;color:#55e27a;transform:scaleX(0.9412);"><span style="color:#55e27a">USED</span></span>
<span class="t" style="left:239px;top:710px;font:normal normal 13px Liberation Sans;color:#d4dae0;transform:scaleX(0.9521);">SWAP</span>
<span class="t" style="left:301px;top:710px;font:normal normal 13px Liberation Sans;color:#f0f0f0;transform:scaleX(0.9676);">0</span>
<div style="left:314px;top:747px;width:205px;height:38px;background:#022a54;border:1px solid #3b5d8c;"></div>
<span class="t" style="left:315px;top:732px;font:normal normal 13px Liberation Sans;color:#55e27a;transform:scaleX(0.9532);"><span style="color:#55e27a">IN</span><span style="color:#c8cdd4">/</span><span style="color:#e8e050">OUT</span></span>
<span class="t" style="left:239px;top:773px;font:normal normal 13px Liberation Sans;color:#d4dae0;transform:scaleX(1.0385);">NET</span>
<span class="t" style="left:285px;top:773px;font:normal normal 13px Liberation Sans;color:#f0f0f0;transform:scaleX(1.0598);">242</span>
<div style="left:315px;top:307px;width:11px;height:36px;background:#55e57a;"></div>
<div style="left:315px;top:370px;width:4px;height:36px;background:#55e57a;"></div>
<div style="left:319px;top:370px;width:2px;height:36px;background:#e08030;"></div>
<div style="left:315px;top:433px;width:9px;height:36px;background:#55e57a;"></div>
<div style="left:315px;top:559px;width:109px;height:36px;background:#55e57a;"></div>
<div style="left:424px;top:559px;width:5px;height:36px;background:#f5e642;"></div>
<div style="left:429px;top:559px;width:27px;height:36px;background:#0cb8e0;"></div>
<div style="left:605px;top:282px;width:531px;height:236px;background:#000;"></div>
<div style="left:606px;top:283px;width:529px;height:234px;background:#8c8c8c;box-shadow:inset 1px 1px 0 #d8d6d8,inset 2px 2px 0 #aaaaaa,inset 3px 3px 0 #8c8c8c,inset 4px 4px 0 #6e6e6e,inset 5px 5px 0 #545454,inset -1px -1px 0 #464646,inset -2px -2px 0 #5c5c5c,inset -3px -3px 0 #767676,inset -4px -4px 0 #949494,inset -5px -5px 0 #cccccc;"></div>
<div style="left:635px;top:283px;width:1px;height:5px;background:#545454;"></div>
<div style="left:636px;top:283px;width:1px;height:5px;background:#d8d6d8;"></div>
<div style="left:635px;top:512px;width:1px;height:5px;background:#545454;"></div>
<div style="left:636px;top:512px;width:1px;height:5px;background:#d8d6d8;"></div>
<div style="left:1104px;top:283px;width:1px;height:5px;background:#545454;"></div>
<div style="left:1105px;top:283px;width:1px;height:5px;background:#d8d6d8;"></div>
<div style="left:1104px;top:512px;width:1px;height:5px;background:#545454;"></div>
<div style="left:1105px;top:512px;width:1px;height:5px;background:#d8d6d8;"></div>
<div style="left:606px;top:311px;width:5px;height:1px;background:#545454;"></div>
<div style="left:606px;top:312px;width:5px;height:1px;background:#d8d6d8;"></div>
<div style="left:1130px;top:311px;width:5px;height:1px;background:#545454;"></div>
<div style="left:1130px;top:312px;width:5px;height:1px;background:#d8d6d8;"></div>
<div style="left:606px;top:486px;width:5px;height:1px;background:#545454;"></div>
<div style="left:606px;top:487px;width:5px;height:1px;background:#d8d6d8;"></div>
<div style="left:1130px;top:486px;width:5px;height:1px;background:#545454;"></div>
<div style="left:1130px;top:487px;width:5px;height:1px;background:#d8d6d8;"></div>
<div style="left:611px;top:288px;width:519px;height:224px;background:#000;box-shadow:1px 1px 0 #d0d0d0,-1px -1px 0 #545454;"></div>
<div style="left:612px;top:289px;width:24px;height:23px;background:#8a888a;box-shadow:inset 1px 1px 0 #dcdcdc,inset -1px -1px 0 #585858;"></div>
<div style="left:617px;top:298px;width:17px;height:6px;background:#000;"></div>
<div style="left:618px;top:299px;width:14px;height:3px;background:#8a888a;"></div>
<div style="left:1081px;top:289px;width:24px;height:23px;background:#8a888a;box-shadow:inset 1px 1px 0 #dcdcdc,inset -1px -1px 0 #585858;"></div>
<div style="left:1105px;top:289px;width:24px;height:23px;background:#8a888a;box-shadow:inset 1px 1px 0 #dcdcdc,inset -1px -1px 0 #585858;"></div>
<div style="left:1090px;top:298px;width:6px;height:6px;background:transparent;border:1px solid #000;"></div>
<div style="left:1096px;top:299px;width:1px;height:6px;background:#000;"></div>
<div style="left:1091px;top:304px;width:6px;height:1px;background:#000;"></div>
<div style="left:1110px;top:292px;width:15px;height:16px;background:transparent;border:1px solid #000;"></div>
<div style="left:1125px;top:293px;width:2px;height:17px;background:#000;"></div>
<div style="left:1111px;top:308px;width:16px;height:2px;background:#000;"></div>
<div style="left:636px;top:289px;width:445px;height:23px;background:#8a888a;box-shadow:inset 1px 1px 0 #dcdcdc,inset -1px -1px 0 #585858;"></div>
<div style="left:612px;top:313px;width:517px;height:198px;background:#9bbdbd;"></div>
<span class="t" style="left:650px;top:291px;font:italic normal 15px Liberation Sans;color:#000;transform:scaleX(0.9722);-webkit-text-stroke:0.35px #000">~ +T</span>
<div style="left:612px;top:313px;width:517px;height:52px;background:#dedcdf;"></div>
<div style="left:1117px;top:365px;width:12px;height:146px;background:#a9a9a9;border-left:1px solid #b8b8b8;"></div>
<span class="t" style="left:633px;top:343px;font:normal normal 15px Liberation Sans;color:#111;transform:scaleX(1.0423);">Up</span>
<span class="t" style="left:684px;top:343px;font:normal normal 15px Liberation Sans;color:#111;transform:scaleX(1.0746);">Home</span>
<span class="t" style="left:748px;top:343px;font:normal normal 15px Liberation Sans;color:#111;transform:scaleX(1.0525);">Scan</span>
<span class="t" style="left:813px;top:343px;font:normal normal 15px Liberation Sans;color:#111;transform:scaleX(1.0278);">Size</span>
<span class="t" style="left:876px;top:343px;font:normal normal 15px Liberation Sans;color:#111;transform:scaleX(1.0278);">Size</span>
<span class="t" style="left:928px;top:343px;font:normal normal 15px Liberation Sans;color:#111;transform:scaleX(1.0903);">Details</span>
<svg style="left:630px;top:318px" width="26" height="24" viewBox="0 0 26 24">
<defs><linearGradient id="ga" x1="0" x2="1"><stop offset="0" stop-color="#9be24a"/><stop offset="1" stop-color="#4caa1a"/></linearGradient></defs>
<path d="M13,1.5 L24,13 L18,13 L18,22 L8,22 L8,13 L2,13 Z" fill="url(#ga)" stroke="#4a9a20" stroke-width="1"/>
</svg>
<svg style="left:694px;top:318px" width="24" height="24" viewBox="0 0 24 24">
<path d="M3,11 L12,2 L21,11" fill="none" stroke="#444" stroke-width="1.6"/>
<rect x="5" y="10" width="14" height="11" fill="#f4f4f0" stroke="#888" stroke-width="0.6"/>
<rect x="6" y="2" width="3" height="5" fill="#c03020"/>
<rect x="7" y="13" width="4" height="8" fill="#d04818"/>
<rect x="13" y="13" width="4" height="4" fill="#888"/>
<rect x="3" y="21" width="18" height="1.2" fill="#6c6"/>
</svg>
<svg style="left:755px;top:318px" width="24" height="24" viewBox="0 0 24 24">
<path d="M4,11 A8,7 0 0 1 18,6 L20,3 L21,11 L13,10 L16,8 A5.5,5 0 0 0 7,11 Z" fill="#3a7ad0" stroke="#2a5aa0" stroke-width="0.6"/>
<path d="M20,13 A8,7 0 0 1 6,18 L4,21 L3,13 L11,14 L8,16 A5.5,5 0 0 0 17,13 Z" fill="#5a9ae0" stroke="#2a5aa0" stroke-width="0.6"/>
</svg>
<svg style="left:815.6px;top:317px" width="26" height="26" viewBox="-10 -10 26 26">
<line x1="4.5" y1="4.5" x2="11" y2="11" stroke="#333" stroke-width="2.6" stroke-linecap="round"/>
<circle cx="0" cy="0" r="6.3" fill="#eee" stroke="#444" stroke-width="1.2"/><path d="M-3,0 H3 M0,-3 V3" stroke="#333" stroke-width="1.6"/></svg>
<svg style="left:877.5px;top:317px" width="26" height="26" viewBox="-10 -10 26 26">
<line x1="4.5" y1="4.5" x2="11" y2="11" stroke="#333" stroke-width="2.6" stroke-linecap="round"/>
<circle cx="0" cy="0" r="6.3" fill="#eee" stroke="#444" stroke-width="1.2"/><path d="M-3.5,-1.5 V-3.5 H-1.5 M1.5,-3.5 H3.5 V-1.5 M3.5,1.5 V3.5 H1.5 M-1.5,3.5 H-3.5 V1.5" stroke="#333" stroke-width="1" fill="none"/></svg>
<svg style="left:941px;top:318px" width="24" height="22" viewBox="0 0 24 22">
<rect x="1" y="0.5" width="20" height="19.5" rx="1.5" fill="#fff" stroke="#111" stroke-width="1.2"/>
<path d="M4,4 H18 M4,6.5 H18 M4,9 H18 M4,11.5 H18 M4,14 H18 M4,16.5 H18" stroke="#333" stroke-width="0.9"/>
<rect x="2" y="20" width="20" height="1.5" fill="#aaa"/>
</svg>
<svg style="left:646px;top:367px" width="38" height="48" viewBox="0 0 38 48">
<polygon points="1,43 29,30.5 34,33 6,46" fill="#6b6565"/>
<polygon points="2.8,16.9 31,2.8 31,26.25 2.8,39.3" fill="#f0f0f0" stroke="#444" stroke-width="0.6"/>
<polygon points="0.5,15 2.8,16.9 2.8,39.3 0.5,38" fill="#f8f040" stroke="#333" stroke-width="0.5"/>
<polygon points="0.5,14.5 28.9,0.7 31,2.8 2.8,16.9" fill="#f8f040" stroke="#333" stroke-width="0.5"/>
<polygon points="5.7,11.5 8,8 13,5.6 15.8,7.2 16,12 13,13.8 8,15.8 6,15.5" fill="#f8f040" stroke="#333" stroke-width="0.5"/>
</svg>
<span class="t" style="left:632px;top:419px;font:normal normal 15px Liberation Sans;color:#111;transform:scaleX(1.1085);">Desktop</span>
<svg style="left:646px;top:439px" width="38" height="48" viewBox="0 0 38 48">
<polygon points="1,43 29,30.5 34,33 6,46" fill="#6b6565"/>
<polygon points="2.8,16.9 31,2.8 31,26.25 2.8,39.3" fill="#f0f0f0" stroke="#444" stroke-width="0.6"/>
<polygon points="0.5,15 2.8,16.9 2.8,39.3 0.5,38" fill="#f8f040" stroke="#333" stroke-width="0.5"/>
<polygon points="0.5,14.5 28.9,0.7 31,2.8 2.8,16.9" fill="#f8f040" stroke="#333" stroke-width="0.5"/>
<polygon points="5.7,11.5 8,8 13,5.6 15.8,7.2 16,12 13,13.8 8,15.8 6,15.5" fill="#f8f040" stroke="#333" stroke-width="0.5"/>
</svg>
<span class="t" style="left:640px;top:491px;font:normal normal 15px Liberation Sans;color:#111;transform:scaleX(1.0769);">Public</span>
<svg style="left:747px;top:367px" width="38" height="48" viewBox="0 0 38 48">
<polygon points="1,43 29,30.5 34,33 6,46" fill="#6b6565"/>
<polygon points="2.8,16.9 31,2.8 31,26.25 2.8,39.3" fill="#f0f0f0" stroke="#444" stroke-width="0.6"/>
<polygon points="0.5,15 2.8,16.9 2.8,39.3 0.5,38" fill="#f8f040" stroke="#333" stroke-width="0.5"/>
<polygon points="0.5,14.5 28.9,0.7 31,2.8 2.8,16.9" fill="#f8f040" stroke="#333" stroke-width="0.5"/>
<polygon points="5.7,11.5 8,8 13,5.6 15.8,7.2 16,12 13,13.8 8,15.8 6,15.5" fill="#f8f040" stroke="#333" stroke-width="0.5"/>
</svg>
<span class="t" style="left:720px;top:419px;font:normal normal 15px Liberation Sans;color:#111;transform:scaleX(1.1203);">Documents</span>
<svg style="left:747px;top:439px" width="38" height="48" viewBox="0 0 38 48">
<polygon points="1,43 29,30.5 34,33 6,46" fill="#6b6565"/>
<polygon points="2.8,16.9 31,2.8 31,26.25 2.8,39.3" fill="#f0f0f0" stroke="#444" stroke-width="0.6"/>
<polygon points="0.5,15 2.8,16.9 2.8,39.3 0.5,38" fill="#f8f040" stroke="#333" stroke-width="0.5"/>
<polygon points="0.5,14.5 28.9,0.7 31,2.8 2.8,16.9" fill="#f8f040" stroke="#333" stroke-width="0.5"/>
<polygon points="5.7,11.5 8,8 13,5.6 15.8,7.2 16,12 13,13.8 8,15.8 6,15.5" fill="#f8f040" stroke="#333" stroke-width="0.5"/>
</svg>
<span class="t" style="left:725px;top:491px;font:normal normal 15px Liberation Sans;color:#111;transform:scaleX(1.1115);">Templates</span>
<svg style="left:848px;top:367px" width="38" height="48" viewBox="0 0 38 48">
<polygon points="1,43 29,30.5 34,33 6,46" fill="#6b6565"/>
<polygon points="2.8,16.9 31,2.8 31,26.25 2.8,39.3" fill="#f0f0f0" stroke="#444" stroke-width="0.6"/>
<polygon points="0.5,15 2.8,16.9 2.8,39.3 0.5,38" fill="#f8f040" stroke="#333" stroke-width="0.5"/>
<polygon points="0.5,14.5 28.9,0.7 31,2.8 2.8,16.9" fill="#f8f040" stroke="#333" stroke-width="0.5"/>
<polygon points="5.7,11.5 8,8 13,5.6 15.8,7.2 16,12 13,13.8 8,15.8 6,15.5" fill="#f8f040" stroke="#333" stroke-width="0.5"/>
</svg>
<span class="t" style="left:824px;top:419px;font:normal normal 15px Liberation Sans;color:#111;transform:scaleX(1.0914);">Downloads</span>
<svg style="left:848px;top:439px" width="38" height="48" viewBox="0 0 38 48">
<polygon points="1,43 29,30.5 34,33 6,46" fill="#6b6565"/>
<polygon points="2.8,16.9 31,2.8 31,26.25 2.8,39.3" fill="#f0f0f0" stroke="#444" stroke-width="0.6"/>
<polygon points="0.5,15 2.8,16.9 2.8,39.3 0.5,38" fill="#f8f040" stroke="#333" stroke-width="0.5"/>
<polygon points="0.5,14.5 28.9,0.7 31,2.8 2.8,16.9" fill="#f8f040" stroke="#333" stroke-width="0.5"/>
<polygon points="5.7,11.5 8,8 13,5.6 15.8,7.2 16,12 13,13.8 8,15.8 6,15.5" fill="#f8f040" stroke="#333" stroke-width="0.5"/>
</svg>
<span class="t" style="left:840px;top:491px;font:normal normal 15px Liberation Sans;color:#111;transform:scaleX(1.0528);">Videos</span>
<svg style="left:949px;top:367px" width="38" height="48" viewBox="0 0 38 48">
<polygon points="1,43 29,30.5 34,33 6,46" fill="#6b6565"/>
<polygon points="2.8,16.9 31,2.8 31,26.25 2.8,39.3" fill="#f0f0f0" stroke="#444" stroke-width="0.6"/>
<polygon points="0.5,15 2.8,16.9 2.8,39.3 0.5,38" fill="#f8f040" stroke="#333" stroke-width="0.5"/>
<polygon points="0.5,14.5 28.9,0.7 31,2.8 2.8,16.9" fill="#f8f040" stroke="#333" stroke-width="0.5"/>
<polygon points="5.7,11.5 8,8 13,5.6 15.8,7.2 16,12 13,13.8 8,15.8 6,15.5" fill="#f8f040" stroke="#333" stroke-width="0.5"/>
</svg>
<span class="t" style="left:944px;top:419px;font:normal normal 15px Liberation Sans;color:#111;transform:scaleX(1.0722);">Music</span>
<svg style="left:949px;top:439px" width="38" height="48" viewBox="0 0 38 48">
<polygon points="1,43 29,30.5 34,33 6,46" fill="#6b6565"/>
<polygon points="2.8,16.9 31,2.8 31,26.25 2.8,39.3" fill="#f0f0f0" stroke="#444" stroke-width="0.6"/>
<polygon points="0.5,15 2.8,16.9 2.8,39.3 0.5,38" fill="#f8f040" stroke="#333" stroke-width="0.5"/>
<polygon points="0.5,14.5 28.9,0.7 31,2.8 2.8,16.9" fill="#f8f040" stroke="#333" stroke-width="0.5"/>
<polygon points="5.7,11.5 8,8 13,5.6 15.8,7.2 16,12 13,13.8 8,15.8 6,15.5" fill="#f8f040" stroke="#333" stroke-width="0.5"/>
</svg>
<span class="t" style="left:947px;top:491px;font:normal normal 15px Liberation Sans;color:#111;transform:scaleX(1.1066);">snap</span>
<svg style="left:1050px;top:367px" width="38" height="48" viewBox="0 0 38 48">
<polygon points="1,43 29,30.5 34,33 6,46" fill="#6b6565"/>
<polygon points="2.8,16.9 31,2.8 31,26.25 2.8,39.3" fill="#f0f0f0" stroke="#444" stroke-width="0.6"/>
<polygon points="0.5,15 2.8,16.9 2.8,39.3 0.5,38" fill="#f8f040" stroke="#333" stroke-width="0.5"/>
<polygon points="0.5,14.5 28.9,0.7 31,2.8 2.8,16.9" fill="#f8f040" stroke="#333" stroke-width="0.5"/>
<polygon points="5.7,11.5 8,8 13,5.6 15.8,7.2 16,12 13,13.8 8,15.8 6,15.5" fill="#f8f040" stroke="#333" stroke-width="0.5"/>
</svg>
<span class="t" style="left:1036px;top:419px;font:normal normal 15px Liberation Sans;color:#111;transform:scaleX(1.0888);">Pictures</span>
<span class="t" style="left:1018px;top:491px;font:normal normal 15px Liberation Sans;color:#111;transform:scaleX(1.0966);">Sgiresources</span>
<svg style="left:1054px;top:440px" width="30" height="44" viewBox="0 0 30 44">
<polygon points="3,39.5 26,31.5 26,34.5 3,42.5" fill="#222"/>
<polygon points="3.2,6.7 24,0 24,31.7 3.2,38.6" fill="#fde8e0" stroke="#555" stroke-width="0.6"/>
<path d="M6,12 L21,7 M6,15.5 L21,10.5 M6,19 L21,14 M6,22.5 L21,17.5 M6,26 L21,21 M6,29.5 L21,24.5 M6,33 L16,29.7" stroke="#555" stroke-width="0.7"/>
</svg>
<div style="left:125px;top:10px;width:97px;height:101px;background:#8c8a8c;box-shadow:inset 1px 1px 0 #d8d8d8,inset -1px -1px 0 #4c4c4c;"></div>
<div style="left:129px;top:14px;width:89px;height:72px;background:#8c8a8c;box-shadow:inset 1px 1px 0 #6a6a6a,inset -1px -1px 0 #b0b0b0;"></div>
<div style="left:130px;top:15px;width:87px;height:70px;background:#e4e4e4;"></div>
<div style="left:126px;top:87px;width:95px;height:1px;background:#505050;"></div>
<div style="left:126px;top:88px;width:95px;height:1px;background:#d8d8d8;"></div>
<div style="left:126px;top:89px;width:95px;height:20px;overflow:hidden">
<span class="t" style="left:22px;top:1px;font:normal normal 15px Liberation Sans;color:#1a1a1a;transform:scaleX(0.9265);">Console</span>
</div>
<div style="left:222px;top:10px;width:97px;height:101px;background:#8c8a8c;box-shadow:inset 1px 1px 0 #d8d8d8,inset -1px -1px 0 #4c4c4c;"></div>
<div style="left:226px;top:14px;width:89px;height:72px;background:#8c8a8c;box-shadow:inset 1px 1px 0 #6a6a6a,inset -1px -1px 0 #b0b0b0;"></div>
<div style="left:227px;top:15px;width:87px;height:70px;background:#e4e4e4;"></div>
<div style="left:223px;top:87px;width:95px;height:1px;background:#505050;"></div>
<div style="left:223px;top:88px;width:95px;height:1px;background:#d8d8d8;"></div>
<div style="left:223px;top:89px;width:95px;height:20px;overflow:hidden">
<span class="t" style="left:32px;top:1px;font:normal normal 15px Liberation Sans;color:#1a1a1a;transform:scaleX(0.9203);">ideas</span>
</div>
<div style="left:319px;top:10px;width:97px;height:101px;background:#8c8a8c;box-shadow:inset 1px 1px 0 #d8d8d8,inset -1px -1px 0 #4c4c4c;"></div>
<div style="left:323px;top:14px;width:89px;height:72px;background:#8c8a8c;box-shadow:inset 1px 1px 0 #6a6a6a,inset -1px -1px 0 #b0b0b0;"></div>
<div style="left:324px;top:15px;width:87px;height:70px;background:#e4e4e4;"></div>
<div style="left:320px;top:87px;width:95px;height:1px;background:#505050;"></div>
<div style="left:320px;top:88px;width:95px;height:1px;background:#d8d8d8;"></div>
<div style="left:320px;top:89px;width:95px;height:20px;overflow:hidden">
<span class="t" style="left:3px;top:1px;font:normal normal 15px Liberation Sans;color:#1a1a1a;transform:scaleX(0.9724);">Untitled Document</span>
</div>
<svg style="left:131px;top:16px" width="85" height="67" viewBox="0 0 85 67">
<defs><radialGradient id="cbg" cx="0.75" cy="0.9" r="0.9"><stop offset="0" stop-color="#9a7eb8"/><stop offset="0.5" stop-color="#5a3a8a"/><stop offset="1" stop-color="#2a1450"/></radialGradient></defs>
<rect width="85" height="67" fill="url(#cbg)"/>
<polygon points="16.2,10.8 22.1,8.3 27.1,44.6 16.2,36" fill="#a89a84"/>
<polygon points="22.1,8.3 60.4,3.3 60.8,37.1 27.1,44.6" fill="#cfc4ac"/>
<polygon points="29.6,12.9 57.9,9.2 57.9,32.9 29.6,37.5" fill="#3a3a38"/>
<path d="M34,22.1 L55,18.3" stroke="#5a6ab0" stroke-width="1.2"/>
<path d="M34,28.3 L55,24.6 M34,33.3 L55,29.6" stroke="#c8c8e8" stroke-width="1.2"/>
<polygon points="29.6,50.4 60.4,40.4 70.4,48.7 39.6,62.1" fill="#d8cdb4"/>
<polygon points="39.6,62.1 70.4,48.7 70.4,50.5 39.6,64" fill="#8a7e68"/>
<path d="M20.4,42 Q8,44 11.2,49 Q13,53 18,56" fill="none" stroke="#e0d8c0" stroke-width="1.4"/>
<ellipse cx="23" cy="58" rx="5" ry="3" fill="#e4dcc4" transform="rotate(35 23 58)"/>
</svg>
<svg style="left:228px;top:16px" width="86" height="67" viewBox="0 0 86 67">
<defs><linearGradient id="iw" x1="0" y1="0" x2="0" y2="1"><stop offset="0" stop-color="#2a2a2a"/><stop offset="1" stop-color="#d8d8d8"/></linearGradient>
<linearGradient id="ib" x1="0" y1="0" x2="0" y2="1"><stop offset="0" stop-color="#4e4e3e"/><stop offset="1" stop-color="#707058"/></linearGradient></defs>
<rect width="86" height="67" fill="url(#ib)"/>
<polygon points="0,0 15,0 0,40.3" fill="url(#iw)"/>
<polygon points="70,0 86,0 86,41" fill="url(#iw)"/>
<text x="42" y="13" font-family="Liberation Serif" font-style="italic" font-size="7" text-anchor="middle" fill="#111">ideas in</text>
<text x="42" y="18.5" font-family="Liberation Serif" font-style="italic" font-size="7" text-anchor="middle" fill="#111">motion</text>
<g fill="none" stroke-linecap="round" stroke-linejoin="round">
<path d="M24.6,24 Q41,17 61.6,24.6" stroke="#4a3c88" stroke-width="4.5"/>
<path d="M35,26 L19.7,31 L19.7,47.5 L25.5,47.5 M45.4,26 L66.2,31 L66.2,47.5 L57,47.5" stroke="#3a2c70" stroke-width="5"/>
<path d="M35,26 L19.7,31 L19.7,47.5 L25.5,47.5 M45.4,26 L66.2,31 L66.2,47.5 L57,47.5" stroke="#7a68c0" stroke-width="3.6"/>
<path d="M20.9,54.2 L37.5,55 M43,55 L63.4,54.2" stroke="#5a4aa0" stroke-width="4.5"/>
<path d="M35.2,24 L35.2,55 M45.4,24 L45.4,55" stroke="#5a4aa0" stroke-width="5"/>
<path d="M35.2,25 L35.2,54 M45.4,25 L45.4,54 M19.2,33 L19.2,46 M65.7,33 L65.7,46" stroke="#e0d4f8" stroke-width="1.4"/>
</g>
<polygon points="30,58 56,58 52,67 34,67" fill="#7a7a64" opacity="0.6"/>
</svg>
<svg style="left:325px;top:16px" width="86" height="67" viewBox="0 0 86 67">
<rect width="86" height="67" fill="#3e7268"/>
<polygon points="0,35 30,26 86,62 86,67 0,67" fill="#f2f0e4"/>
<path d="M2,46 L36,38 M2,52 L40,43 M2,58 L46,49 M2,64 L52,55" stroke="#a8c8d0" stroke-width="0.8"/>
<ellipse cx="13" cy="53" rx="11" ry="5" fill="none" stroke="#705848" stroke-width="1" transform="rotate(15 13 53)"/>
<polygon points="40,48 86,50 86,67 70,67 50,56" fill="#1a2a80"/>
<path d="M26,48 Q30,32 42,30 Q56,27 68,34 L86,42 L86,60 Q70,62 56,56 Q44,60 36,58 Z" fill="#b87048"/>
<path d="M40,42 Q56,40 70,48" fill="none" stroke="#d89870" stroke-width="2"/>
<line x1="18" y1="58" x2="69" y2="21" stroke="#111" stroke-width="3.6" stroke-linecap="round"/>
<circle cx="38" cy="44" r="1" fill="#ddd"/><circle cx="56" cy="31" r="1" fill="#ddd"/>
</svg>
<div style="left:14px;top:125px;width:108px;height:203px;background:#000;"></div>
<div style="left:15px;top:126px;width:106px;height:22px;background:#8a888a;box-shadow:inset 1px 1px 0 #d8d8d8,inset -1px -1px 0 #505050;"></div>
<div style="left:15px;top:149px;width:106px;height:178px;background:#c8c6c8;box-shadow:inset 1px 1px 0 #f0f0f0,inset -1px -1px 0 #5a5a5a;"></div>
<div style="left:121px;top:149px;width:1px;height:179px;background:#5a5a5a"></div>
<span class="t" style="left:30px;top:128px;font:italic normal 15px Liberation Sans;color:#000;transform:scaleX(1.0211);-webkit-text-stroke:0.35px #000">Toolchest</span>
<span class="t" style="left:26px;top:154px;font:italic normal 15px Liberation Sans;color:#000;transform:scaleX(1.0358);-webkit-text-stroke:0.35px #000">Desktop</span>
<svg style="left:96px;top:155px" width="14" height="18" viewBox="0 0 14 18">
<path d="M2,1.5 H11 Q12.5,1.5 12.5,3 V16.5 H2.5 Q1.5,16.5 1.5,15 V3 Q1.5,1.5 3,1.5 Z" fill="none" stroke="#000" stroke-width="1.3"/>
<rect x="1.5" y="3" width="11" height="2.2" fill="#000"/>
<path d="M13,4 V17.5 H3" fill="none" stroke="#000" stroke-width="1"/>
</svg>
<div style="left:17px;top:174px;width:102px;height:1px;background:#6a686a;"></div>
<div style="left:17px;top:175px;width:102px;height:1px;background:#eeeeee;"></div>
<span class="t" style="left:26px;top:179px;font:italic normal 15px Liberation Sans;color:#000;transform:scaleX(1.0278);-webkit-text-stroke:0.35px #000">Selected</span>
<svg style="left:96px;top:180px" width="14" height="18" viewBox="0 0 14 18">
<path d="M2,1.5 H11 Q12.5,1.5 12.5,3 V16.5 H2.5 Q1.5,16.5 1.5,15 V3 Q1.5,1.5 3,1.5 Z" fill="none" stroke="#000" stroke-width="1.3"/>
<rect x="1.5" y="3" width="11" height="2.2" fill="#000"/>
<path d="M13,4 V17.5 H3" fill="none" stroke="#000" stroke-width="1"/>
</svg>
<div style="left:17px;top:199px;width:102px;height:1px;background:#6a686a;"></div>
<div style="left:17px;top:200px;width:102px;height:1px;background:#eeeeee;"></div>
<span class="t" style="left:26px;top:204px;font:italic normal 15px Liberation Sans;color:#000;transform:scaleX(1.1007);-webkit-text-stroke:0.35px #000">Internet</span>
<svg style="left:96px;top:205px" width="14" height="18" viewBox="0 0 14 18">
<path d="M2,1.5 H11 Q12.5,1.5 12.5,3 V16.5 H2.5 Q1.5,16.5 1.5,15 V3 Q1.5,1.5 3,1.5 Z" fill="none" stroke="#000" stroke-width="1.3"/>
<rect x="1.5" y="3" width="11" height="2.2" fill="#000"/>
<path d="M13,4 V17.5 H3" fill="none" stroke="#000" stroke-width="1"/>
</svg>
<div style="left:17px;top:224px;width:102px;height:1px;background:#6a686a;"></div>
<div style="left:17px;top:225px;width:102px;height:1px;background:#eeeeee;"></div>
<span class="t" style="left:26px;top:229px;font:italic normal 15px Liberation Sans;color:#000;transform:scaleX(1.0621);-webkit-text-stroke:0.35px #000">Find</span>
<svg style="left:96px;top:230px" width="14" height="18" viewBox="0 0 14 18">
<path d="M2,1.5 H11 Q12.5,1.5 12.5,3 V16.5 H2.5 Q1.5,16.5 1.5,15 V3 Q1.5,1.5 3,1.5 Z" fill="none" stroke="#000" stroke-width="1.3"/>
<rect x="1.5" y="3" width="11" height="2.2" fill="#000"/>
<path d="M13,4 V17.5 H3" fill="none" stroke="#000" stroke-width="1"/>
</svg>
<div style="left:17px;top:249px;width:102px;height:1px;background:#6a686a;"></div>
<div style="left:17px;top:250px;width:102px;height:1px;background:#eeeeee;"></div>
<span class="t" style="left:26px;top:254px;font:italic normal 15px Liberation Sans;color:#000;transform:scaleX(0.9997);-webkit-text-stroke:0.35px #000">System</span>
<svg style="left:96px;top:255px" width="14" height="18" viewBox="0 0 14 18">
<path d="M2,1.5 H11 Q12.5,1.5 12.5,3 V16.5 H2.5 Q1.5,16.5 1.5,15 V3 Q1.5,1.5 3,1.5 Z" fill="none" stroke="#000" stroke-width="1.3"/>
<rect x="1.5" y="3" width="11" height="2.2" fill="#000"/>
<path d="M13,4 V17.5 H3" fill="none" stroke="#000" stroke-width="1"/>
</svg>
<div style="left:17px;top:274px;width:102px;height:1px;background:#6a686a;"></div>
<div style="left:17px;top:275px;width:102px;height:1px;background:#eeeeee;"></div>
<span class="t" style="left:26px;top:279px;font:italic normal 15px Liberation Sans;color:#000;transform:scaleX(1.0046);-webkit-text-stroke:0.35px #000">Help</span>
<svg style="left:96px;top:280px" width="14" height="18" viewBox="0 0 14 18">
<path d="M2,1.5 H11 Q12.5,1.5 12.5,3 V16.5 H2.5 Q1.5,16.5 1.5,15 V3 Q1.5,1.5 3,1.5 Z" fill="none" stroke="#000" stroke-width="1.3"/>
<rect x="1.5" y="3" width="11" height="2.2" fill="#000"/>
<path d="M13,4 V17.5 H3" fill="none" stroke="#000" stroke-width="1"/>
</svg>
<div style="left:17px;top:299px;width:102px;height:1px;background:#6a686a;"></div>
<div style="left:17px;top:300px;width:102px;height:1px;background:#eeeeee;"></div>
<span class="t" style="left:26px;top:304px;font:italic normal 15px Liberation Sans;color:#000;transform:scaleX(1.0095);-webkit-text-stroke:0.35px #000">DevTool</span>
<svg style="left:96px;top:305px" width="14" height="18" viewBox="0 0 14 18">
<path d="M2,1.5 H11 Q12.5,1.5 12.5,3 V16.5 H2.5 Q1.5,16.5 1.5,15 V3 Q1.5,1.5 3,1.5 Z" fill="none" stroke="#000" stroke-width="1.3"/>
<rect x="1.5" y="3" width="11" height="2.2" fill="#000"/>
<path d="M13,4 V17.5 H3" fill="none" stroke="#000" stroke-width="1"/>
</svg>
<div style="left:1076px;top:0px;width:6px;height:32px;background:#8a8a8a;background-image:radial-gradient(circle,#b8b8b8 0.8px,transparent 1px);background-size:3px 3px;"></div>
<div style="left:1082px;top:0px;width:70px;height:32px;background:#dedcdf;"></div>
<span class="t" style="left:1094px;top:7px;font:normal normal 15px Liberation Sans;color:#000;transform:scaleX(1.1981);">A</span>
<svg style="left:1127px;top:7px" width="18" height="18" viewBox="0 0 18 18">
<path d="M4,3 A4,4 0 0 0 8,9 L14,15 L15.5,13.5 L9.5,7.5 A4,4 0 0 0 5,2 L7,4.5 L5.5,6 Z" fill="#f07818" stroke="#d05808" stroke-width="1"/>
</svg>
<svg style="left:293px;top:4px" width="14" height="20" viewBox="0 0 14 20">
<path d="M1.8,1.5 L1.8,13.5 L4.8,10.8 L7.8,16.5 L10,15.3 L7.5,10 L10.5,9.8 Z" fill="#ff0000" stroke="#fff" stroke-width="1"/>
</svg>
</body></html>
